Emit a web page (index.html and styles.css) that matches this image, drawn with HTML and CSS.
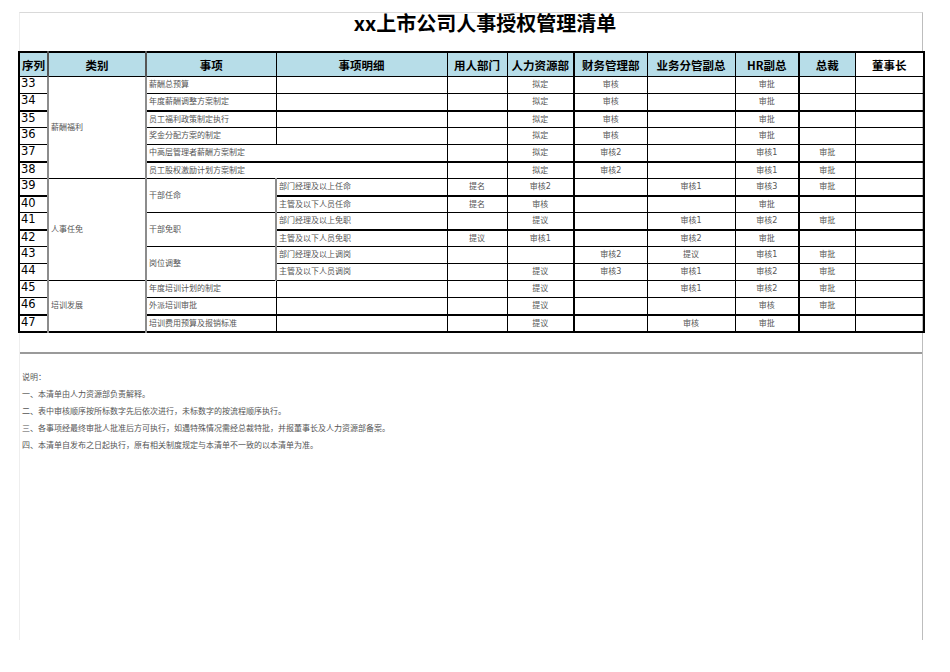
FILE: index.html
```html
<!DOCTYPE html>
<html lang="zh-CN">
<head>
<meta charset="utf-8">
<title>xx上市公司人事授权管理清单</title>
<link rel="stylesheet" href="styles.css">
</head>
<body>
<div class="sheet">
  <h1 class="title">xx上市公司人事授权管理清单</h1>
  <table class="grid">
    <colgroup>
      <col class="w-seq"><col class="w-cat"><col class="w-item"><col class="w-detail">
      <col class="w-dept"><col class="w-hr"><col class="w-fin"><col class="w-biz">
      <col class="w-hrvp"><col class="w-ceo"><col class="w-chair">
    </colgroup>
    <thead>
      <tr>
        <th>序列</th><th class="gl">类别</th><th class="gl">事项</th><th>事项明细</th>
        <th>用人部门</th><th>人力资源部</th><th class="bl">财务管理部</th><th>业务分管副总</th>
        <th>HR副总</th><th class="bl">总裁</th><th class="plain">董事长</th>
      </tr>
    </thead>
    <tbody>
      <tr>
        <td class="num">33</td><td class="cat" rowspan="6">薪酬福利</td><td>薪酬总预算</td><td></td>
        <td></td><td class="c">拟定</td><td class="c bl">审核</td><td></td><td class="c">审批</td><td class="bl"></td><td></td>
      </tr>
      <tr>
        <td class="num">34</td><td>年度薪酬调整方案制定</td><td></td>
        <td></td><td class="c">拟定</td><td class="c bl">审核</td><td></td><td class="c">审批</td><td class="bl"></td><td></td>
      </tr>
      <tr class="thick">
        <td class="num">35</td><td>员工福利政策制定执行</td><td></td>
        <td></td><td class="c">拟定</td><td class="c bl">审核</td><td></td><td class="c">审批</td><td class="bl"></td><td></td>
      </tr>
      <tr>
        <td class="num">36</td><td>奖金分配方案的制定</td><td></td>
        <td></td><td class="c">拟定</td><td class="c bl">审核</td><td></td><td class="c">审批</td><td class="bl"></td><td></td>
      </tr>
      <tr>
        <td class="num">37</td><td colspan="2">中高层管理者薪酬方案制定</td>
        <td></td><td class="c">拟定</td><td class="c bl">审核2</td><td></td><td class="c">审核1</td><td class="c bl">审批</td><td></td>
      </tr>
      <tr class="thick">
        <td class="num">38</td><td colspan="2">员工股权激励计划方案制定</td>
        <td></td><td class="c">拟定</td><td class="c bl">审核2</td><td></td><td class="c">审核1</td><td class="c bl">审批</td><td></td>
      </tr>
      <tr>
        <td class="num">39</td><td class="cat" rowspan="6">人事任免</td><td class="cat" rowspan="2">干部任命</td><td>部门经理及以上任命</td>
        <td class="c">提名</td><td class="c">审核2</td><td class="bl"></td><td class="c">审核1</td><td class="c">审核3</td><td class="c bl">审批</td><td></td>
      </tr>
      <tr class="thick">
        <td class="num">40</td><td>主管及以下人员任命</td>
        <td class="c">提名</td><td class="c">审核</td><td class="bl"></td><td></td><td class="c">审批</td><td class="bl"></td><td></td>
      </tr>
      <tr>
        <td class="num">41</td><td class="cat" rowspan="2">干部免职</td><td>部门经理及以上免职</td>
        <td></td><td class="c">提议</td><td class="bl"></td><td class="c">审核1</td><td class="c">审核2</td><td class="c bl">审批</td><td></td>
      </tr>
      <tr class="thick">
        <td class="num">42</td><td>主管及以下人员免职</td>
        <td class="c">提议</td><td class="c">审核1</td><td class="bl"></td><td class="c">审核2</td><td class="c">审批</td><td class="bl"></td><td></td>
      </tr>
      <tr>
        <td class="num">43</td><td class="cat" rowspan="2">岗位调整</td><td>部门经理及以上调岗</td>
        <td></td><td></td><td class="c bl">审核2</td><td class="c">提议</td><td class="c">审核1</td><td class="c bl">审批</td><td></td>
      </tr>
      <tr>
        <td class="num">44</td><td>主管及以下人员调岗</td>
        <td></td><td class="c">提议</td><td class="c bl">审核3</td><td class="c">审核1</td><td class="c">审核2</td><td class="c bl">审批</td><td></td>
      </tr>
      <tr>
        <td class="num">45</td><td class="cat" rowspan="3">培训发展</td><td>年度培训计划的制定</td><td></td>
        <td></td><td class="c">提议</td><td class="bl"></td><td class="c">审核1</td><td class="c">审核2</td><td class="c bl">审批</td><td></td>
      </tr>
      <tr>
        <td class="num">46</td><td>外派培训审批</td><td></td>
        <td></td><td class="c">提议</td><td class="bl"></td><td></td><td class="c">审核</td><td class="c bl">审批</td><td></td>
      </tr>
      <tr class="thick">
        <td class="num">47</td><td>培训费用预算及报销标准</td><td></td>
        <td></td><td class="c">提议</td><td class="bl"></td><td class="c">审核</td><td class="c">审批</td><td class="bl"></td><td></td>
      </tr>
    </tbody>
  </table>
  <div class="rule"></div>
  <div class="notes">
    <p>说明：</p>
    <p>一、本清单由人力资源部负责解释。</p>
    <p>二、表中审核顺序按所标数字先后依次进行，未标数字的按流程顺序执行。</p>
    <p>三、各事项经最终审批人批准后方可执行，如遇特殊情况需经总裁特批，并报董事长及人力资源部备案。</p>
    <p>四、本清单自发布之日起执行，原有相关制度规定与本清单不一致的以本清单为准。</p>
  </div>
</div>
</body>
</html>
```

FILE: styles.css
```css
html, body {
  margin: 0;
  padding: 0;
  background: #ffffff;
}

body {
  font-family: "DejaVu Sans", "Noto Sans CJK SC", sans-serif;
  color: #000;
}

.sheet {
  margin: 12px 0 0 19px;
  width: 902px;
  height: 627px;
  border-top: 1px solid #d9d9d9;
  border-left: 1px solid #eeeeee;
  border-right: 1px solid #bdbdbd;
}

.title {
  margin: 0;
  height: 38px;
  padding-left: 28px;
  line-height: 19px;
  text-align: center;
  font-family: "Noto Sans CJK SC", sans-serif;
  font-size: 20px;
  font-weight: 700;
  color: #000;
}

.grid {
  margin-left: -2px;
  width: 905px;
  table-layout: fixed;
  border-collapse: collapse;
  border: 2px solid #000;
}

.w-seq { width: 29px; }
.w-cat { width: 98px; }
.w-item { width: 130px; }
.w-detail { width: 171px; }
.w-dept { width: 60px; }
.w-hr { width: 67px; }
.w-fin { width: 73px; }
.w-biz { width: 88px; }
.w-hrvp { width: 64px; }
.w-ceo { width: 56px; }
.w-chair { width: 69px; }

.grid th {
  height: 23px;
  padding: 0;
  background: #b7dde8;
  border: 1px solid #000;
  font-family: "Noto Sans CJK SC", sans-serif;
  font-size: 11.5px;
  font-weight: 700;
  text-align: center;
  white-space: nowrap;
  overflow: hidden;
}

.grid th.plain {
  background: #ffffff;
}

.grid td {
  height: 16px;
  padding: 0 2px;
  border: 1px solid #000;
  font-size: 8px;
  line-height: 10px;
  color: #555;
  white-space: nowrap;
  overflow: hidden;
  vertical-align: middle;
  text-align: left;
}

.grid tr.thick td {
  height: 15px;
  border-top: 2px solid #000;
}

.grid td.num {
  padding: 0 1px;
  font-size: 11.5px;
  line-height: 13px;
  color: #000;
  vertical-align: top;
}

.grid td.c {
  text-align: center;
}

.grid td.cat {
  border-left: 2px solid #8c8c8c;
  border-right: 2px solid #8c8c8c;
}

.grid th.gl {
  border-left: 2px solid #555;
}

.grid .bl {
  border-left: 2px solid #000;
}

.rule {
  margin: 19px 0 0 0;
  height: 0;
  border-top: 2px solid #9a9a9a;
}

.notes {
  padding: 15px 0 0 2px;
}

.notes p {
  margin: 0;
  font-size: 8px;
  line-height: 17px;
  color: #555;
}
```
